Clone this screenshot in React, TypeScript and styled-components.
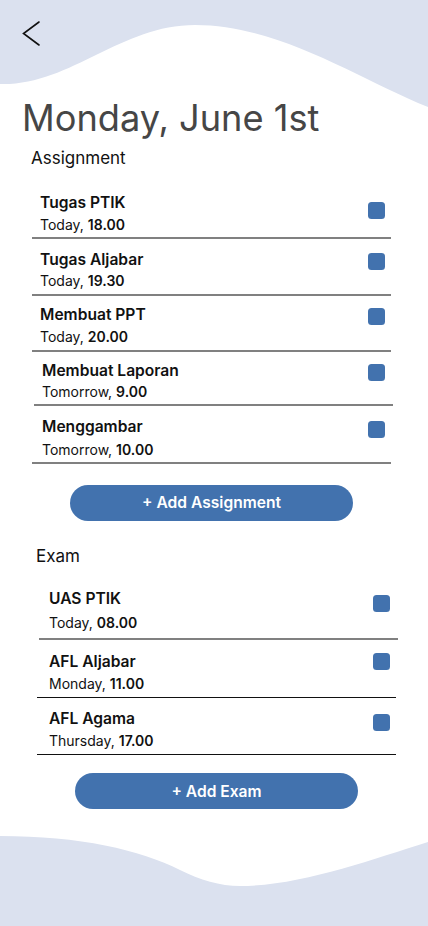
import React from "react";
import styled, { createGlobalStyle } from "styled-components";

const GlobalStyle = createGlobalStyle`
  html, body { margin: 0; padding: 0; background: #ffffff; }
  body { font-family: Inter, "Noto Sans", "Liberation Sans", sans-serif; -webkit-font-smoothing: antialiased; }
  * { box-sizing: border-box; }
`;

const BLUE = "#4272ae";
const WAVE = "#dbe1ef";

const Screen = styled.div`
  position: relative;
  width: 428px;
  height: 926px;
  overflow: hidden;
  background: #ffffff;
`;

const WaveTop = styled.svg`
  position: absolute;
  left: 0;
  top: 0;
  width: 428px;
  height: 110px;
  z-index: 0;
`;

const WaveBottom = styled.svg`
  position: absolute;
  left: 0;
  bottom: 0;
  width: 428px;
  height: 96px;
  z-index: 0;
`;

const Content = styled.div`
  position: relative;
  z-index: 1;
  display: flex;
  flex-direction: column;
  align-items: flex-start;
`;

const BackButton = styled.button`
  margin: 20px 0 0 22px;
  padding: 0;
  border: 0;
  background: transparent;
  width: 19px;
  height: 27px;
  display: flex;
  cursor: pointer;
`;

const Title = styled.h1`
  margin: 49px 0 0 22px;
  font-size: 36.2px;
  line-height: 44px;
  font-weight: 400;
  color: #464646;
  letter-spacing: 0;
`;

const SectionLabel = styled.h2<{ $left: number; $top: number }>`
  margin: ${(p) => p.$top}px 0 0 ${(p) => p.$left}px;
  font-size: 17px;
  line-height: 20px;
  font-weight: 400;
  color: #111111;
`;

const List = styled.ul<{ $left: number; $top: number }>`
  list-style: none;
  margin: ${(p) => p.$top}px 0 0 ${(p) => p.$left}px;
  padding: 0;
  width: 359px;
  display: flex;
  flex-direction: column;
`;

const Row = styled.li<{
  $shift: number;
  $padL: number;
  $padR: number;
  $padT: number;
  $padB: number;
  $thin?: boolean;
}>`
  display: flex;
  align-items: flex-start;
  justify-content: space-between;
  margin-left: ${(p) => p.$shift}px;
  margin-right: ${(p) => -p.$shift}px;
  padding: ${(p) => p.$padT}px ${(p) => p.$padR}px ${(p) => p.$padB}px
    ${(p) => p.$padL}px;
  border-bottom: ${(p) => (p.$thin ? "1px solid #111111" : "2px solid #808080")};
`;

const RowText = styled.div<{ $gap: number }>`
  display: flex;
  flex-direction: column;
  gap: ${(p) => p.$gap}px;
`;

const RowTitle = styled.span`
  font-size: 15.6px;
  line-height: 18px;
  font-weight: 600;
  color: #111111;
`;

const RowSub = styled.span`
  font-size: 14px;
  line-height: 17px;
  font-weight: 400;
  color: #111111;
`;

const Time = styled.b`
  font-weight: 600;
`;

const Check = styled.span<{ $top: number }>`
  display: block;
  width: 17px;
  height: 17px;
  margin-top: ${(p) => p.$top}px;
  border-radius: 3.5px;
  background: ${BLUE};
  flex-shrink: 0;
`;

const AddButton = styled.button<{ $left: number; $top: number }>`
  margin: ${(p) => p.$top}px 0 0 ${(p) => p.$left}px;
  width: 283px;
  height: 36px;
  border: 0;
  border-radius: 18px;
  background: ${BLUE};
  color: #ffffff;
  font-family: Inter, "Noto Sans", "Liberation Sans", sans-serif;
  font-size: 15.6px;
  font-weight: 600;
  display: flex;
  align-items: center;
  justify-content: center;
  cursor: pointer;
`;

type Item = {
  title: string;
  day: string;
  time: string;
  shift: number;
  padL: number;
  padR: number;
  padT: number;
  padB: number;
  gap: number;
  cb: number;
  thin?: boolean;
};

const assignments: Item[] = [
  { title: "Tugas PTIK", day: "Today", time: "18.00", shift: 0, padL: 8, padR: 6, padT: 11, padB: 4.5, gap: 4, cb: 8.5 },
  { title: "Tugas Aljabar", day: "Today", time: "19.30", shift: 0, padL: 8, padR: 6, padT: 11.5, padB: 4.5, gap: 3.5, cb: 2.5 },
  { title: "Membuat PPT", day: "Today", time: "20.00", shift: 0, padL: 8, padR: 6, padT: 10.5, padB: 4.5, gap: 4, cb: 1.5 },
  { title: "Membuat Laporan", day: "Tomorrow", time: "9.00", shift: 2, padL: 8, padR: 8, padT: 10.5, padB: 3.5, gap: 3, cb: 1.5 },
  { title: "Menggambar", day: "Tomorrow", time: "10.00", shift: 0, padL: 10, padR: 6, padT: 12.5, padB: 3.5, gap: 5, cb: 2.5 },
];

const exams: Item[] = [
  { title: "UAS PTIK", day: "Today", time: "08.00", shift: 2, padL: 10, padR: 8, padT: 12, padB: 7, gap: 6.5, cb: 5.5 },
  { title: "AFL Aljabar", day: "Monday", time: "11.00", shift: 0, padL: 12, padR: 6, padT: 12.5, padB: 4.5, gap: 4.5, cb: 0.5, thin: true },
  { title: "AFL Agama", day: "Thursday", time: "17.00", shift: 0, padL: 12, padR: 6, padT: 12.3, padB: 5, gap: 4, cb: 4, thin: true },
];

function TaskRow({ item }: { item: Item }) {
  return (
    <Row
      $shift={item.shift}
      $padL={item.padL}
      $padR={item.padR}
      $padT={item.padT}
      $padB={item.padB}
      $thin={item.thin}
    >
      <RowText $gap={item.gap}>
        <RowTitle>{item.title}</RowTitle>
        <RowSub>
          {item.day}, <Time>{item.time}</Time>
        </RowSub>
      </RowText>
      <Check role="checkbox" aria-checked="false" $top={item.cb} />
    </Row>
  );
}

export default function App() {
  return (
    <>
      <GlobalStyle />
      <Screen>
        <WaveTop viewBox="0 0 428 110" preserveAspectRatio="none" aria-hidden="true">
          <path
            d="M0 0 H428 V107 C360 80, 280 25, 195 25 C120 25, 70 86, 0 84 Z"
            fill={WAVE}
          />
        </WaveTop>
        <WaveBottom viewBox="0 830 428 96" preserveAspectRatio="none" aria-hidden="true">
          <path
            d="M0 836 C80 836, 140 850, 180 870 C200 880, 220 886, 240 886 C300 886, 370 860, 428 842 V926 H0 Z"
            fill={WAVE}
          />
        </WaveBottom>
        <Content>
          <BackButton aria-label="Back">
            <svg width="19" height="27" viewBox="0 0 19 27" fill="none">
              <polyline
                points="17,2 1.5,13.5 17,25"
                stroke="#111111"
                strokeWidth="1.6"
                strokeLinecap="round"
                strokeLinejoin="miter"
              />
            </svg>
          </BackButton>
          <Title>Monday, June 1st</Title>

          <SectionLabel $left={31} $top={8}>Assignment</SectionLabel>
          <List $left={32} $top={14.5}>
            {assignments.map((a) => (
              <TaskRow key={a.title} item={a} />
            ))}
          </List>
          <AddButton $left={70} $top={21}>+ Add Assignment</AddButton>

          <SectionLabel $left={36} $top={25.5}>Exam</SectionLabel>
          <List $left={37} $top={11.5}>
            {exams.map((e) => (
              <TaskRow key={e.title} item={e} />
            ))}
          </List>
          <AddButton $left={75} $top={18.5}>+ Add Exam</AddButton>
        </Content>
      </Screen>
    </>
  );
}
